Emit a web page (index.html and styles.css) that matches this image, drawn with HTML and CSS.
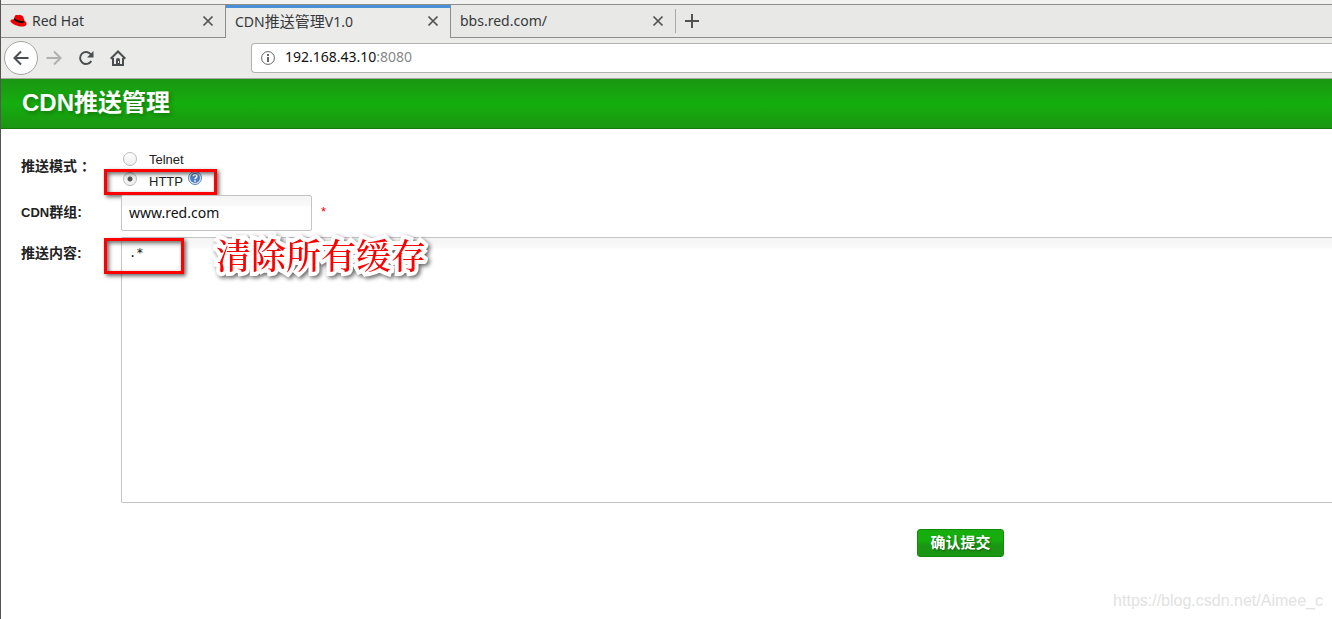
FILE: index.html
```html
<!DOCTYPE html>
<html lang="zh-CN">

<head>
    <meta charset="UTF-8">
    <meta name="viewport" content="width=device-width, initial-scale=1.0">
    <title>CDN推送管理V1.0</title>
    <link rel="stylesheet" href="styles.css">
</head>

<body>
    <div class="window">
        <!-- 标签栏 -->
        <div class="tabs">
            <div class="tab">
                <svg class="favicon" width="18" height="14" viewBox="0 0 18 14">
                    <path fill="#ee0000" d="M3.700 5.500 4.800 2.200C5.300.9 6.300.7 7.500 1.100c.8.3 1.200-.5 2.400-.2 1.800.4 3 .9 3.500 2.400l1 3.400c1.500.8 2.400 2 2.100 3.500-.4 2-3 2.700-6 2.200C6.500 11.700 2 10 .7 7.700-.1 6 1.500 5.200 3.700 5.500z" />
                    <path fill="#111" d="M3.700 5.200c1 2 6.500 4.700 10.300 3.400l.2-1.900c-3 1.300-8.300-.8-10-3z" />
                </svg>
                <span class="tab-title">Red Hat</span>
                <button class="close" type="button" aria-label="关闭">
                    <svg width="12" height="12" viewBox="0 0 12 12"><path d="M1.500 1.500l9 9M10.500 1.500l-9 9" /></svg>
                </button>
            </div>
            <div class="tab active">
                <span class="tab-title">CDN<span class="cjk">推送管理</span>V1.0</span>
                <button class="close" type="button" aria-label="关闭">
                    <svg width="12" height="12" viewBox="0 0 12 12"><path d="M1.500 1.500l9 9M10.500 1.500l-9 9" /></svg>
                </button>
            </div>
            <div class="tab last">
                <span class="tab-title">bbs.red.com/</span>
                <button class="close" type="button" aria-label="关闭">
                    <svg width="12" height="12" viewBox="0 0 12 12"><path d="M1.500 1.500l9 9M10.500 1.500l-9 9" /></svg>
                </button>
            </div>
            <div class="tab-rest">
                <button class="new-tab" type="button" aria-label="新标签页">
                    <svg width="14" height="14" viewBox="0 0 14 14"><path d="M7 0v14M0 7h14" /></svg>
                </button>
            </div>
        </div>

        <!-- 导航工具栏 -->
        <div class="toolbar">
            <button class="nav-btn back" type="button" aria-label="后退">
                <svg width="16" height="16" viewBox="0 0 16 16"><path d="M15.500 8H1.500M8 1.500L1.500 8 8 14.500" /></svg>
            </button>
            <button class="nav-btn forward" type="button" aria-label="前进">
                <svg width="16" height="16" viewBox="0 0 16 16"><path d="M.5 8h14M8 1.500L14.500 8 8 14.500" /></svg>
            </button>
            <button class="nav-btn" type="button" aria-label="刷新">
                <svg width="16" height="16" viewBox="0 0 16 16">
                    <path d="M13 4.500A6 6 0 1 0 13.300 11" />
                    <path class="solid" d="M15.500 1v6.500H9z" />
                </svg>
            </button>
            <button class="nav-btn" type="button" aria-label="主页">
                <svg width="16" height="16" viewBox="0 0 16 16">
                    <path d="M.7 8.700L8 1.500l7.300 7.200M3 8v6.900h10V8" />
                    <path class="solid" d="M6 15V9.500q0-1.500 2-1.500t2 1.500V15z" />
                    <path class="knob" d="M8 11h1v2H8z" />
                </svg>
            </button>
            <div class="url-bar">
                <svg width="14" height="14" viewBox="0 0 14 14">
                    <circle cx="7" cy="7" r="6.400" />
                    <path d="M7 3v2M7 6v5" />
                </svg>
                <span class="url">192.168.43.10<span class="port">:8080</span></span>
            </div>
        </div>

        <h1 class="header">CDN推送管理</h1>

        <form class="push-form">
            <div class="row mode-row">
                <span class="label" id="mode">推送模式 ：</span>
                <div class="modes" role="radiogroup" aria-labelledby="mode">
                    <label class="mode"><input type="radio" name="mode"><span>Telnet</span></label>
                    <div class="mode-line">
                        <label class="mode"><input type="radio" name="mode" checked><span>HTTP</span></label>
                        <svg class="help" width="14" height="14" viewBox="0 0 14 14">
                            <circle cx="7" cy="7" r="6.500" fill="#e4ebf5" stroke="#5b84ba" />
                            <circle cx="7" cy="7" r="5" fill="#4f7fbe" />
                            <path d="M5 5.300C5.200 3.200 9 3.200 9 5.300 9 6.600 7 6.600 7 8.200M7 9.300v1.500" fill="none" stroke="#fff" stroke-width="1.500" />
                        </svg>
                        <div class="mark mark-mode"></div>
                    </div>
                </div>
            </div>
            <div class="row group-row">
                <label class="label" for="group"><span class="latin">CDN</span>群组:</label>
                <input class="field group" id="group" type="text" value="www.red.com">
                <span class="required">*</span>
            </div>
            <div class="row content-row">
                <label class="label" for="content">推送内容:</label>
                <textarea class="field content" id="content" spellcheck="false">.*</textarea>
                <div class="mark mark-content"></div>
                <div class="note">清除所有缓存</div>
            </div>
            <div class="actions">
                <button class="submit" type="submit">确认提交</button>
            </div>
        </form>

        <div class="watermark">https://blog.csdn.net/Aimee_c</div>
    </div>
</body>

</html>
```
FILE: styles.css
```css
* {
    box-sizing: border-box;
    margin: 0;
    padding: 0;
}

body {
    font-family: "Liberation Sans", "Noto Sans CJK SC", sans-serif;
    font-size: 13px;
    color: #222;
    background-color: #fff;
}

button {
    border: 0;
    background: none;
}

svg {
    display: block;
    flex: none;
}

.window {
    position: relative;
    min-height: 100vh;
    border-left: 1px solid #555;
    overflow: hidden;
}

/* 标签栏 */
.tabs {
    display: flex;
    height: 38px;
    padding-top: 4px;
    background: linear-gradient(#f2f2f1 4px, #8e8e89 4px, #8e8e89 5px, #e8e8e6 5px);
    font-family: "Noto Sans", "Noto Sans CJK SC", sans-serif;
    font-size: 14px;
    line-height: 20px;
    color: #36393b;
}

.tab {
    display: flex;
    align-items: center;
    width: 225px;
    padding: 1px 11px 0 9px;
    border-right: 1px solid #8e8e89;
    border-bottom: 1px solid #8e8e89;
}

.tab.active {
    margin-top: 1px;
    padding-top: 0;
    border-top: 3px solid #4a90d9;
    border-bottom: 0;
    background-color: #ebebe9;
    padding-bottom: 4px;
}

.tab.last {
    width: 224px;
    border-right: 0;
}

.favicon {
    margin-right: 4px;
}

.tab-title {
    flex: 1;
    white-space: nowrap;
}

.cjk {
    font-size: 15px;
}

.close path,
.new-tab path {
    fill: none;
    stroke: #50534f;
    stroke-width: 2;
}

.close path {
    stroke-width: 1.7;
}

.tab-rest {
    display: flex;
    flex: 1;
    align-items: center;
    border-bottom: 1px solid #8e8e89;
}

.new-tab {
    padding: 5px 9px;
    border-left: 1px solid #aaa;
}

/* 导航工具栏 */
.toolbar {
    display: flex;
    align-items: center;
    height: 41px;
    padding-left: 3px;
    border-bottom: 1px solid #a9a9a5;
    background-color: #ebebe9;
}

.nav-btn {
    display: flex;
    align-items: center;
    justify-content: center;
    width: 32px;
    height: 32px;
}

.nav-btn path {
    fill: none;
    stroke: #4a4e50;
    stroke-width: 2;
}

.nav-btn .solid {
    fill: #4a4e50;
    stroke: none;
}

.nav-btn .knob {
    fill: #ebebe9;
    stroke: none;
}

.nav-btn.back {
    width: 34px;
    height: 34px;
    border: 1px solid #a6a6a3;
    border-radius: 50%;
    background-color: #fdfdfd;
}

.nav-btn.forward path {
    stroke: #afb0af;
}

.url-bar {
    display: flex;
    flex: 1;
    align-items: center;
    gap: 10px;
    height: 30px;
    margin-left: 117px;
    padding-left: 9px;
    border: 1px solid #b2b2af;
    border-right: 0;
    border-radius: 4px 0 0 4px;
    background-color: #fff;
    font-family: "Noto Sans", sans-serif;
    font-size: 14px;
    line-height: 20px;
    color: #111;
}

.url {
    padding-bottom: 2px;
}

.url-bar circle,
.url-bar path {
    fill: none;
    stroke: #666;
}

.url-bar path {
    stroke-width: 2;
}

.port {
    color: #888;
}

/* 页面标题 */
.header {
    height: 50px;
    padding-left: 21px;
    border-bottom: 1px solid #147a0d;
    background: linear-gradient(#1a9612, #15ae0d 50%, #1a9612);
    font-size: 24px;
    line-height: 48px;
    color: #fff;
    text-shadow: 2px 2px 4px rgba(0, 0, 0, 0.3);
}

/* 表单 */
.push-form {
    padding: 18px 0 0 20px;
}

.row {
    display: flex;
    position: relative;
}

.label {
    flex: none;
    width: 100px;
    font-size: 14px;
    font-weight: bold;
    line-height: 20px;
}

.latin {
    font-size: 13px;
}

.mode-row {
    height: 48px;
}

.mode-row .label {
    padding-top: 9px;
}

.mode,
.mode-line {
    display: flex;
    align-items: center;
    height: 22px;
}

.mode {
    gap: 12px;
}

.mode-line {
    position: relative;
    gap: 5px;
}

.help {
    margin-bottom: 6px;
}

.mode input {
    appearance: none;
    width: 14px;
    height: 14px;
    margin-left: 2px;
    border: 1px solid #bbb;
    border-radius: 50%;
    background: linear-gradient(#fff, #ededed);
}

.mode input:checked {
    margin-bottom: 4px;
    background: radial-gradient(circle, #555 2px, #f1f1f1 3px);
}

.field {
    border: 1px solid #c4c4c4;
    border-radius: 2px;
    background: linear-gradient(#f4f4f4, #fafafa 10px, #fff 11px);
    color: #111;
    outline: none;
}

.group-row {
    height: 42px;
}

.group-row .label {
    padding-top: 7px;
}

.modes {
    padding-top: 1px;
}

.group {
    width: 191px;
    height: 36px;
    padding: 0 7px 2px;
    font: 14px "Noto Sans", sans-serif;
}

.required {
    padding: 9px;
    color: #f00;
}

.content-row .label {
    padding-top: 6px;
}

.content {
    flex: 1;
    height: 266px;
    padding: 7px;
    border-right: 0;
    border-radius: 2px 0 0 2px;
    font: 12px/16px "DejaVu Sans Mono", monospace;
    resize: none;
}

.actions {
    display: flex;
    justify-content: flex-end;
    padding: 26px 328px 0 0;
}

.submit {
    width: 87px;
    height: 28px;
    padding-bottom: 2px;
    border: 1px solid #138a0c;
    border-radius: 3px;
    background: linear-gradient(#15ae0d 40%, #1a9612 60%);
    font: bold 15px "Noto Sans CJK SC", sans-serif;
    line-height: 24px;
    color: #fff;
    text-shadow: 1px 1px 2px rgba(0, 0, 0, 0.4);
}

/* 红色标注 */
.mark {
    position: absolute;
    border: 3px solid #f00;
    box-shadow: 2px 2px 4px rgba(0, 0, 0, 0.6), inset 2px 2px 4px rgba(0, 0, 0, 0.6);
    pointer-events: none;
}

.mark-mode {
    top: -1px;
    left: -17px;
    width: 113px;
    height: 26px;
}

.mark-content {
    top: 1px;
    left: 83px;
    width: 80px;
    height: 36px;
}

.note {
    position: absolute;
    top: -3px;
    left: 195px;
    font-family: "Noto Serif CJK SC", "Noto Sans CJK SC", serif;
    font-size: 35px;
    font-weight: 500;
    line-height: 40px;
    color: #f00;
    -webkit-text-stroke: 8px #fff;
    paint-order: stroke fill;
    stroke-linejoin: round;
    filter: drop-shadow(2px 2px 2px rgba(0, 0, 0, 0.6));
}

.watermark {
    position: absolute;
    right: 9px;
    bottom: 8px;
    font-size: 16px;
    line-height: 20px;
    color: #e2e2e2;
}
```
